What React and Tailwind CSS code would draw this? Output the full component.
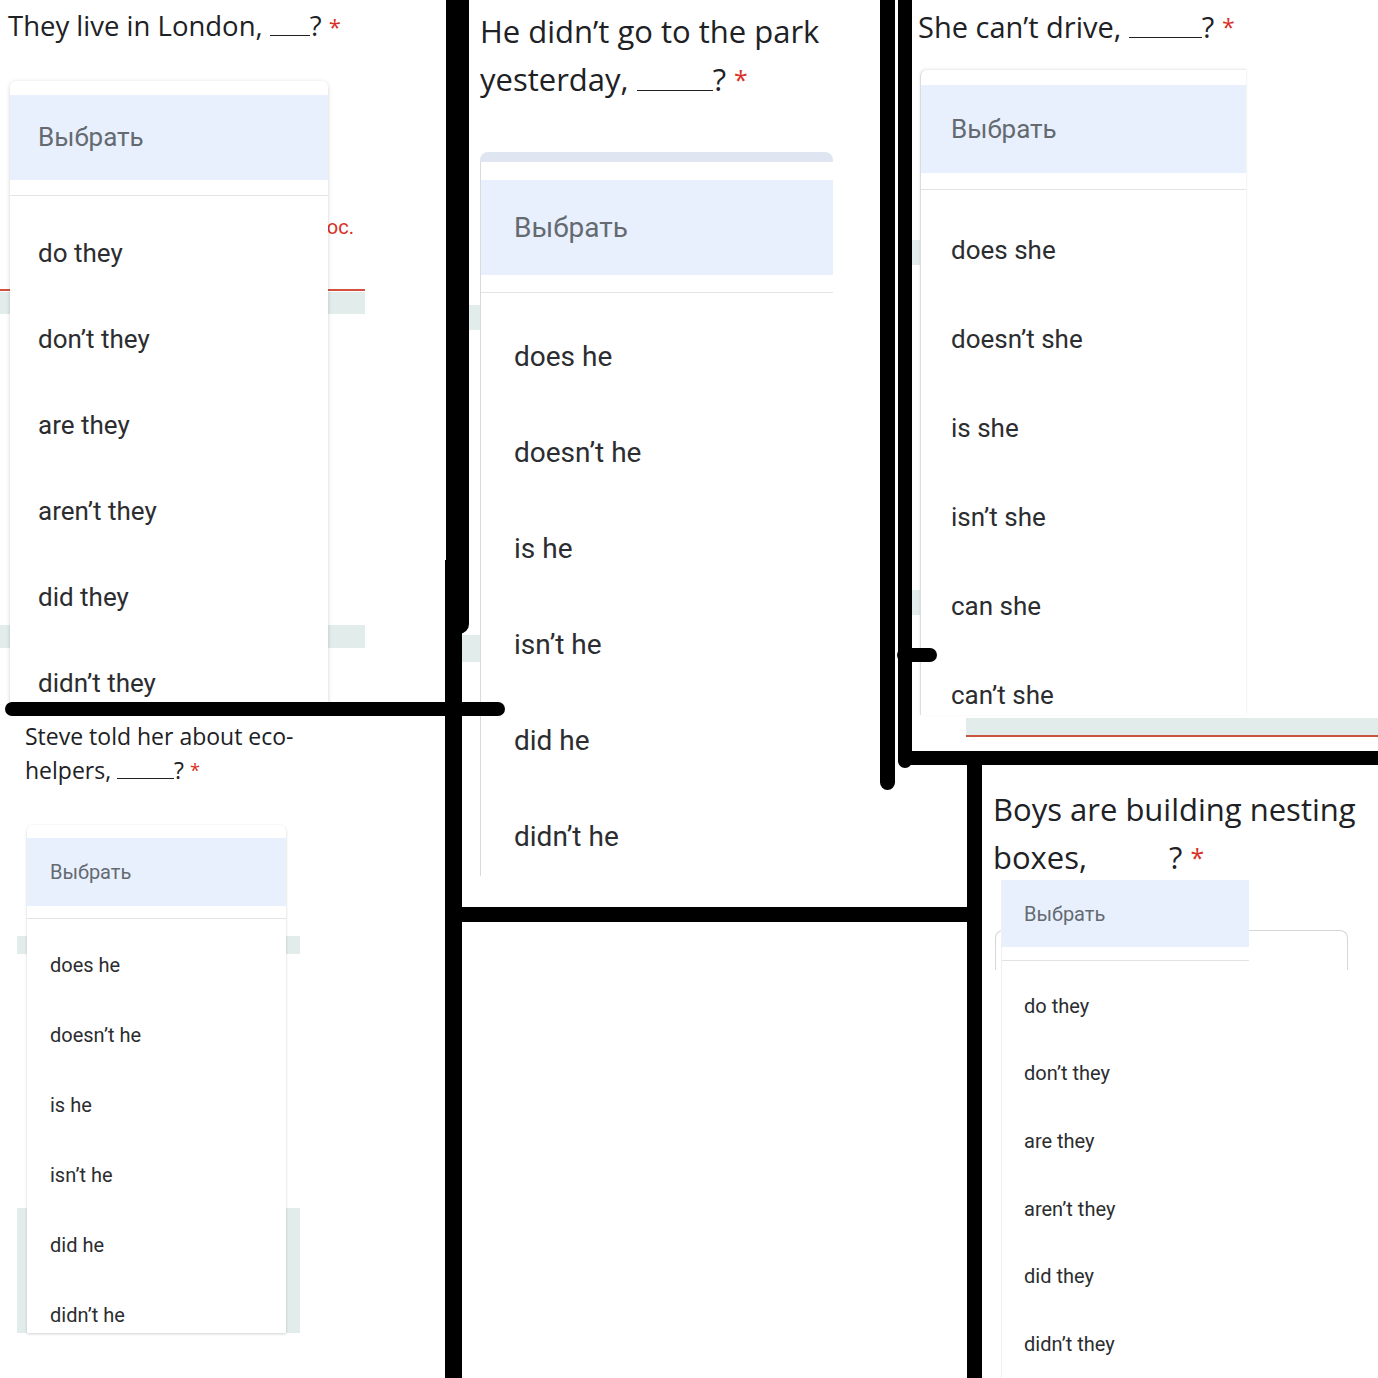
import React from 'react';

const Q = "font-['Open_Sans',sans-serif] text-[#202124]";
const R = "font-['Roboto',sans-serif]";

const theyOpts = ["do they", "don’t they", "are they", "aren’t they", "did they", "didn’t they"];
const heOpts = ["does he", "doesn’t he", "is he", "isn’t he", "did he", "didn’t he"];
const sheOpts = ["does she", "doesn’t she", "is she", "isn’t she", "can she", "can’t she"];

// one row of the open dropdown
const Option = ({ label, rowClass }) => (
  <div className={`flex items-center text-[#2b2d30] ${R} ${rowClass}`}>{label}</div>
);

const Star = () => <span className="text-[#d93025] text-[0.8em] align-top">*</span>;

// the "_____" gap in a question
const Blank = ({ w }) => <span className={`inline-block border-b-[1.5px] border-[#202124] ${w}`} />;

// hand drawn marker strokes over the collage
const strokes = [
  "left-[446px] top-0 w-[23px] h-[634px] rounded-b-[10px]",
  "left-[445px] top-[560px] w-[17px] h-[818px]",
  "left-[5px] top-[702px] w-[500px] h-[14px] rounded-full",
  "left-[880px] top-0 w-[15px] h-[790px] rounded-b-full",
  "left-[898px] top-0 w-[14px] h-[768px] rounded-b-full",
  "left-[897px] top-[648px] w-[40px] h-[14px] rounded-full",
  "left-[900px] top-[751px] w-[478px] h-[14px]",
  "left-[455px] top-[907px] w-[522px] h-[15px]",
  "left-[967px] top-[755px] w-[15px] h-[623px]",
];

const App = () => {
  return (
    <div className="relative grid h-[1378px] w-[1378px] grid-cols-[462px_450px_466px] grid-rows-[716px_662px] overflow-hidden bg-white">
      {/* They live in London */}
      <div className="relative col-start-1 row-start-1 h-[702px] w-[445px] self-start overflow-hidden">
        <div className="absolute left-0 top-[289px] h-[2px] w-[365px] bg-[#d4503f]" />
        <div className="absolute left-0 top-[292px] h-[22px] w-[365px] bg-[#e2ecea]" />
        <div className="absolute left-0 top-[625px] h-[23px] w-[365px] bg-[#e2ecea]" />
        <span className={`absolute right-[91px] top-[212px] text-[20px] text-[#d93025] ${R}`}>вопрос.</span>
        <p className={`relative pl-[8px] pt-[8px] text-[27.5px] leading-[36px] ${Q}`}>
          They live in London, <Blank w="w-[40px]" />? <Star />
        </p>
        <div className="relative ml-[10px] mt-[37px] h-[640px] w-[318px] overflow-hidden rounded-t-[6px] bg-white pt-[14px] shadow-[0_1px_4px_rgba(0,0,0,0.18)]">
          <div className={`flex h-[85px] items-center bg-[#e8f0fe] pl-[28px] text-[26px] text-[#646a70] ${R}`}>Выбрать</div>
          <div className="mt-[15px] border-t border-[#e3e3e3] pt-[14px]">
            {theyOpts.map((o) => (
              <Option key={o} label={o} rowClass="h-[86px] pl-[28px] text-[26px]" />
            ))}
          </div>
        </div>
      </div>

      {/* Steve told her about eco-helpers */}
      <div className="relative col-start-1 row-start-2 h-[662px] w-[445px] overflow-hidden">
        <div className="absolute left-[17px] top-[220px] h-[18px] w-[283px] bg-[#e2ecea]" />
        <div className="absolute left-[17px] top-[492px] h-[125px] w-[283px] bg-[#e2ecea]" />
        <p className={`pl-[25px] pt-[3px] text-[23px] leading-[34px] ${Q}`}>
          Steve told her about eco-
          <br />
          helpers, <Blank w="w-[57px]" />? <Star />
        </p>
        <div className="relative ml-[27px] mt-[38px] h-[508px] w-[259px] overflow-hidden rounded-t-[6px] bg-white pt-[13px] shadow-[0_1px_3px_rgba(0,0,0,0.18)]">
          <div className={`flex h-[68px] items-center bg-[#e8f0fe] pl-[23px] text-[20px] text-[#646a70] ${R}`}>Выбрать</div>
          <div className="mt-[12px] border-t border-[#e3e3e3] pt-[11px]">
            {heOpts.map((o) => (
              <Option key={o} label={o} rowClass="h-[70px] pl-[23px] text-[20px]" />
            ))}
          </div>
        </div>
      </div>

      {/* He didn't go to the park */}
      <div className="relative col-start-2 row-span-2 row-start-1 h-[907px] w-[418px] self-start overflow-hidden">
        <div className="absolute left-0 top-[305px] h-[25px] w-[18px] bg-[#e2ecea]" />
        <div className="absolute left-0 top-[635px] h-[27px] w-[18px] bg-[#e2ecea]" />
        <p className={`pl-[18px] pt-[7px] text-[31px] leading-[48px] ${Q}`}>
          He didn’t go to the park
          <br />
          yesterday, <Blank w="w-[76px]" />? <Star />
        </p>
        <div className="ml-[18px] mt-[49px] w-[353px]">
          <div className="h-[10px] rounded-t-[8px] bg-[#dfe6f1]" />
          <div className="h-[714px] overflow-hidden border-l border-[#dadada] bg-white pt-[18px]">
            <div className={`flex h-[95px] items-center bg-[#e8f0fe] pl-[33px] text-[28px] text-[#646a70] ${R}`}>Выбрать</div>
            <div className="mt-[17px] border-t border-[#e3e3e3] pt-[16px]">
              {heOpts.map((o) => (
                <Option key={o} label={o} rowClass="h-[96px] pl-[33px] text-[28px]" />
              ))}
            </div>
          </div>
        </div>
      </div>

      {/* She can't drive */}
      <div className="relative col-start-3 row-start-1 h-[751px] w-[466px] self-start overflow-hidden">
        <div className="absolute left-0 top-[240px] h-[25px] w-[8px] bg-[#e2ecea]" />
        <div className="absolute left-0 top-[590px] h-[25px] w-[8px] bg-[#e2ecea]" />
        <div className="absolute left-[54px] top-[718px] h-[17px] w-[412px] bg-[#e2ecea]" />
        <div className="absolute left-[54px] top-[735px] h-[2px] w-[412px] bg-[#c8553f]" />
        <p className={`pl-[6px] pt-[9px] text-[29px] leading-[36px] ${Q}`}>
          She can’t drive, <Blank w="w-[73px]" />? <Star />
        </p>
        <div className="relative ml-[8px] mt-[25px] h-[645px] w-[326px] overflow-hidden rounded-tl-[6px] border-l border-[#dcdcdc] bg-white pt-[15px] shadow-[0_-1px_3px_rgba(0,0,0,0.1)]">
          <div className={`flex h-[88px] items-center bg-[#e8f0fe] pl-[30px] text-[26px] text-[#646a70] ${R}`}>Выбрать</div>
          <div className="mt-[16px] border-t border-[#e3e3e3] pt-[16px]">
            {sheOpts.map((o) => (
              <Option key={o} label={o} rowClass="h-[89px] pl-[30px] text-[26px]" />
            ))}
          </div>
        </div>
      </div>

      {/* Boys are building nesting boxes */}
      <div className="relative col-start-3 row-start-2 ml-[70px] mt-[49px] h-[613px] w-[396px] self-start overflow-hidden">
        <div className="absolute left-[13px] top-[165px] h-[40px] w-[353px] rounded-t-[8px] border border-b-0 border-[#d6d6d6]" />
        <p className={`pl-[11px] pt-[20px] text-[31px] leading-[48px] ${Q}`}>
          Boys are building nesting
          <br />
          boxes,<span className="inline-block w-[82px]" />? <Star />
        </p>
        <div className="relative -mt-px ml-[19px] w-[248px] border-l border-[#f0f0f0] bg-white">
          <div className={`flex h-[67px] items-center bg-[#e8f0fe] pl-[22px] text-[20px] text-[#646a70] ${R}`}>Выбрать</div>
          <div className="mt-[13px] border-t border-[#e3e3e3] pt-[11px]">
            {theyOpts.map((o) => (
              <Option key={o} label={o} rowClass="h-[67.6px] pl-[22px] text-[20px]" />
            ))}
          </div>
        </div>
      </div>

      {strokes.map((s) => (
        <div key={s} className={`absolute bg-black ${s}`} />
      ))}
    </div>
  );
};

export default App;
